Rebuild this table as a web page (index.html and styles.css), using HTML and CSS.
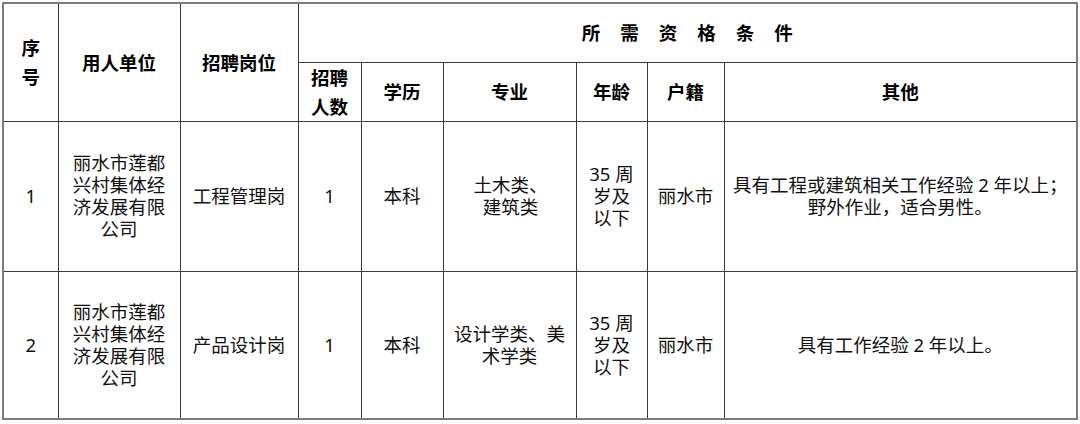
FILE: index.html
```html
<!DOCTYPE html>
<html lang="zh-CN">
<head>
<meta charset="utf-8">
<title>招聘岗位</title>
<link rel="stylesheet" href="styles.css">
</head>
<body>
<table class="jobs">
  <colgroup>
    <col class="c-no">
    <col class="c-unit">
    <col class="c-post">
    <col class="c-num">
    <col class="c-edu">
    <col class="c-major">
    <col class="c-age">
    <col class="c-home">
    <col class="c-other">
  </colgroup>
  <thead>
    <tr class="h1">
      <th rowspan="2" class="p-no">序号</th>
      <th rowspan="2">用人单位</th>
      <th rowspan="2">招聘岗位</th>
      <th colspan="6" class="spread">所需资格条件</th>
    </tr>
    <tr class="h2">
      <th class="p-num">招聘人数</th>
      <th>学历</th>
      <th>专业</th>
      <th>年龄</th>
      <th>户籍</th>
      <th>其他</th>
    </tr>
  </thead>
  <tbody>
    <tr class="r1">
      <td>1</td>
      <td class="p-unit">丽水市莲都兴村集体经济发展有限公司</td>
      <td>工程管理岗</td>
      <td>1</td>
      <td>本科</td>
      <td class="p-major-narrow">土木类、建筑类</td>
      <td class="p-age">35 周岁及以下</td>
      <td>丽水市</td>
      <td class="p-other">具有工程或建筑相关工作经验 2 年以上；野外作业，适合男性。</td>
    </tr>
    <tr class="r2">
      <td>2</td>
      <td class="p-unit">丽水市莲都兴村集体经济发展有限公司</td>
      <td>产品设计岗</td>
      <td>1</td>
      <td>本科</td>
      <td class="p-major">设计学类、美术学类</td>
      <td class="p-age">35 周岁及以下</td>
      <td>丽水市</td>
      <td class="p-other">具有工作经验 2 年以上。</td>
    </tr>
  </tbody>
</table>
</body>
</html>
```

FILE: styles.css
```css
html, body {
  margin: 0;
  padding: 0;
  background: #ffffff;
}

body {
  padding: 2px 0 0 2px;
  font-family: "Noto Sans", "Noto Sans CJK SC", sans-serif;
  color: #111111;
}

.jobs {
  border-collapse: collapse;
  table-layout: fixed;
  width: 1075px;
  border: 2px solid #7c7c7c;
}

.c-no { width: 55px; }
.c-unit { width: 122px; }
.c-post { width: 118px; }
.c-num { width: 63px; }
.c-edu { width: 82px; }
.c-major { width: 133px; }
.c-age { width: 71px; }
.c-home { width: 77px; }
.c-other { width: 353px; }

.jobs th,
.jobs td {
  border: 1px solid #3a3a3a;
  text-align: center;
  vertical-align: middle;
  padding: 0 6px;
  font-size: 18.5px;
}

.jobs th {
  font-weight: 700;
  color: #000;
  line-height: 29px;
}

.jobs td {
  line-height: 22px;
  font-weight: 400;
}

.h1 { height: 59px; }
.h2 { height: 59px; }
.r1 { height: 150px; }
.r2 { height: 148px; }

.jobs th.p-no { padding: 0 10px; }

.jobs th.spread {
  letter-spacing: 20px;
  padding-left: 26px;
}

.jobs td.p-unit { padding: 0 10px; }
.jobs td.p-age { padding: 0 9px; }
.jobs td.p-major-narrow { padding: 0 26px 0 28px; }
.jobs td.p-other { padding: 0 8px; }
```
